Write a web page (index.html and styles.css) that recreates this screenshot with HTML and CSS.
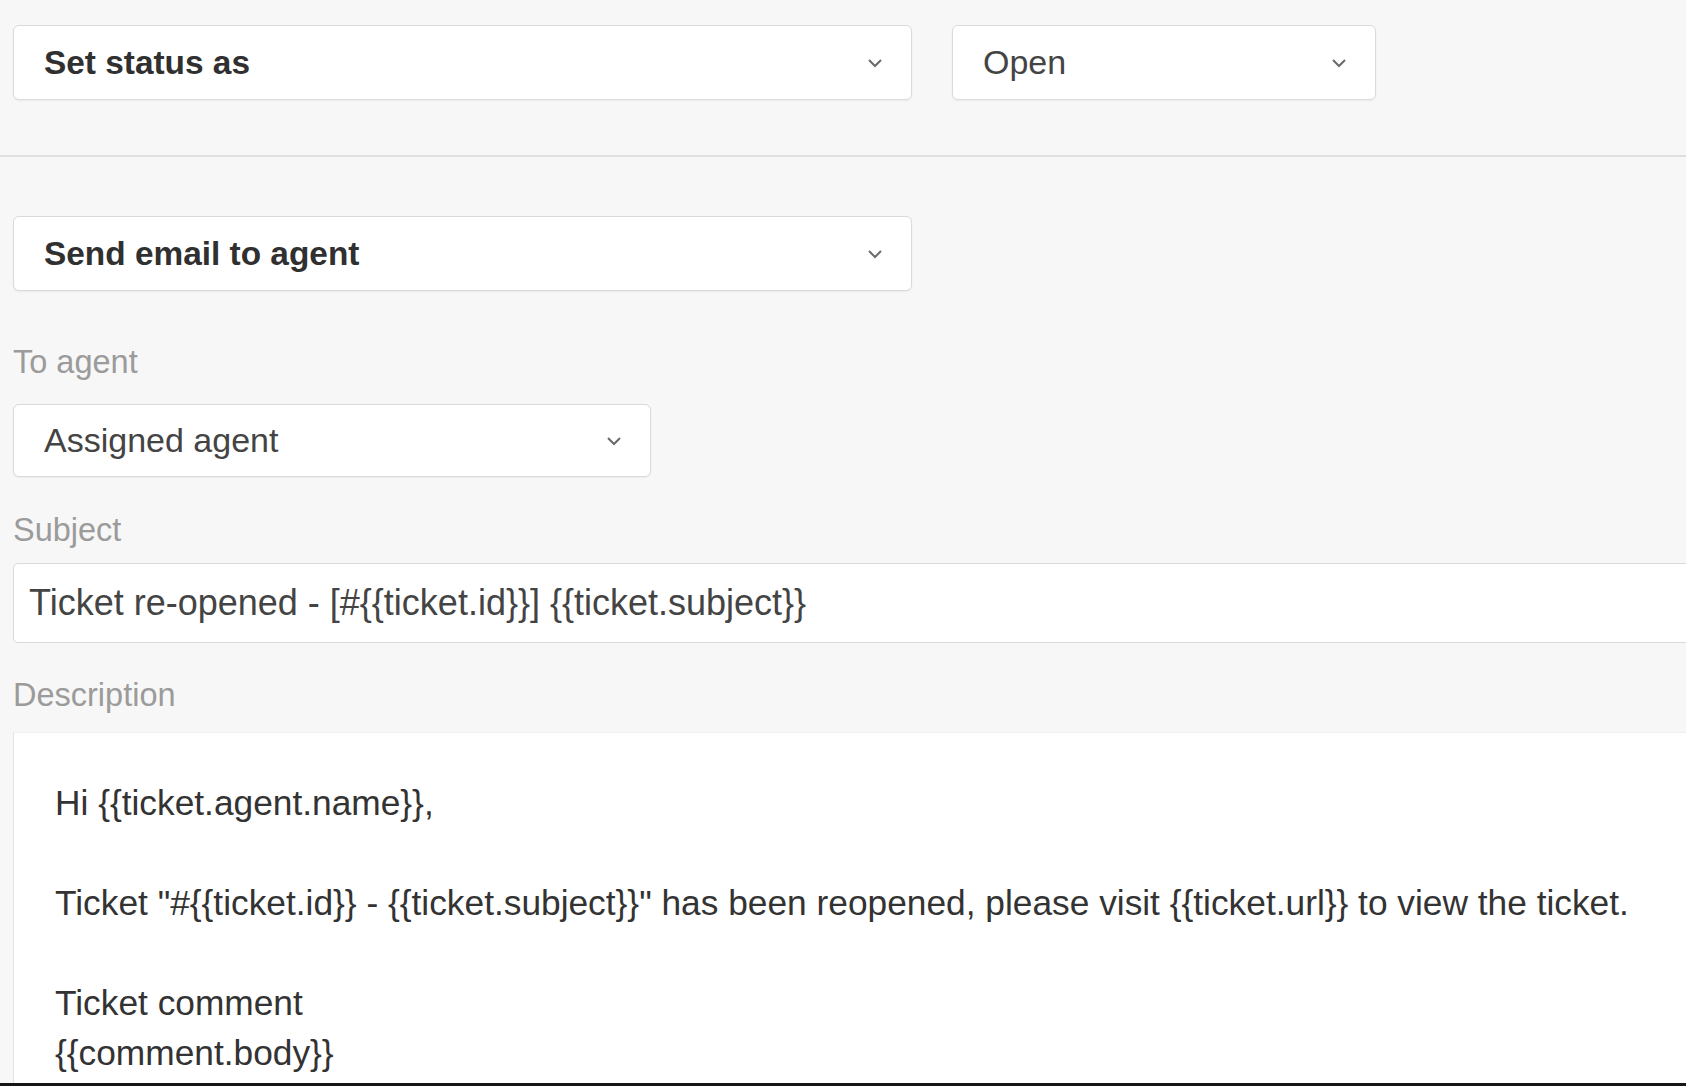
FILE: index.html
```html
<!DOCTYPE html>
<html lang="en">
    <head>
        <meta charset="UTF-8">
        <meta name="viewport" content="width=device-width, initial-scale=1.0">
        <title>Automation action</title>

        <link rel="stylesheet" href="styles.css">
    </head>

    <body>
        <div id="page">

            <div class="action-row">
                <div class="select select-action select-wide">
                    <span>Set status as</span>
                    <svg class="chevron" width="16" height="10" viewBox="0 0 16 10"><polyline points="2,2 8,8 14,2"/></svg>
                </div>
                <div class="select select-status">
                    <span>Open</span>
                    <svg class="chevron" width="16" height="10" viewBox="0 0 16 10"><polyline points="2,2 8,8 14,2"/></svg>
                </div>
            </div>

            <div class="action-block">
                <div class="select select-action select-wide">
                    <span>Send email to agent</span>
                    <svg class="chevron" width="16" height="10" viewBox="0 0 16 10"><polyline points="2,2 8,8 14,2"/></svg>
                </div>

                <label class="field-label label-agent">To agent</label>
                <div class="select select-agent">
                    <span>Assigned agent</span>
                    <svg class="chevron" width="16" height="10" viewBox="0 0 16 10"><polyline points="2,2 8,8 14,2"/></svg>
                </div>

                <label class="field-label label-subject">Subject</label>
                <div class="text-input">Ticket re-opened - [#{{ticket.id}}] {{ticket.subject}}</div>

                <label class="field-label label-desc">Description</label>
                <div class="editor">
                    <p>Hi {{ticket.agent.name}},</p>
                    <p>Ticket "#{{ticket.id}} - {{ticket.subject}}" has been reopened, please visit {{ticket.url}} to view the ticket.</p>
                    <p>Ticket comment<br>{{comment.body}}</p>
                </div>
            </div>

            <div class="frame-edge"></div>
        </div>
    </body>
</html>
```

FILE: styles.css
```css
html, body{
    margin: 0;
    height: 100%;
}
body{
    background-color: #f7f7f7;
    font-family: "Liberation Sans", Arial, Helvetica, sans-serif;
    overflow: hidden;
}
#page{
    height: 100vh;
    display: flex;
    flex-direction: column;
}

.action-row{
    flex-shrink: 0;
    display: flex;
    gap: 40px;
    padding: 25px 0 55px 13px;
    border-bottom: 2px solid #dfdfdf;
}
.action-block{
    flex: 1;
    min-height: 0;
    display: flex;
    flex-direction: column;
    align-items: flex-start;
    padding: 59px 0 0 13px;
}
.action-block > *{
    flex-shrink: 0;
}

.select{
    box-sizing: border-box;
    height: 75px;
    display: flex;
    align-items: center;
    justify-content: space-between;
    padding: 0 28px 0 30px;
    background-color: #fff;
    border: 1px solid #dadada;
    border-radius: 6px;
    box-shadow: 0 1px 2px rgba(0, 0, 0, 0.05);
    color: #444;
    font-size: 34px;
}
.select-wide{
    width: 899px;
}
.select-status{
    width: 424px;
}
.select-agent{
    width: 638px;
    height: 73px;
}
.select-action{
    color: #303030;
    font-size: 33.4px;
    font-weight: bold;
}
.chevron{
    fill: none;
    stroke: #6a6a6a;
    stroke-width: 2;
}

.field-label{
    display: block;
    color: #9b9b9b;
    font-size: 32.5px;
    line-height: 36px;
}
.label-agent{
    margin: 53px 0 24px;
}
.label-subject{
    margin: 35px 0 15px;
}
.label-desc{
    margin: 34px 0 19px;
}

.text-input{
    box-sizing: border-box;
    width: calc(100% + 40px);
    height: 80px;
    display: flex;
    align-items: center;
    padding-left: 15px;
    background-color: #fff;
    border: 1px solid #dadada;
    border-radius: 5px;
    color: #444;
    font-size: 36px;
    white-space: nowrap;
}

.editor{
    box-sizing: border-box;
    flex: 1;
    flex-shrink: 1;
    width: calc(100% + 40px);
    padding: 45px 0 0 41px;
    background-color: #fff;
    border-left: 1px solid #e4e4e4;
    border-top: 1px solid #efefef;
    color: #333;
    font-size: 35.3px;
    line-height: 50px;
    white-space: nowrap;
}
.editor p{
    margin: 0 0 50px;
}

.frame-edge{
    flex-shrink: 0;
    height: 3px;
    background-color: #161616;
}
```
